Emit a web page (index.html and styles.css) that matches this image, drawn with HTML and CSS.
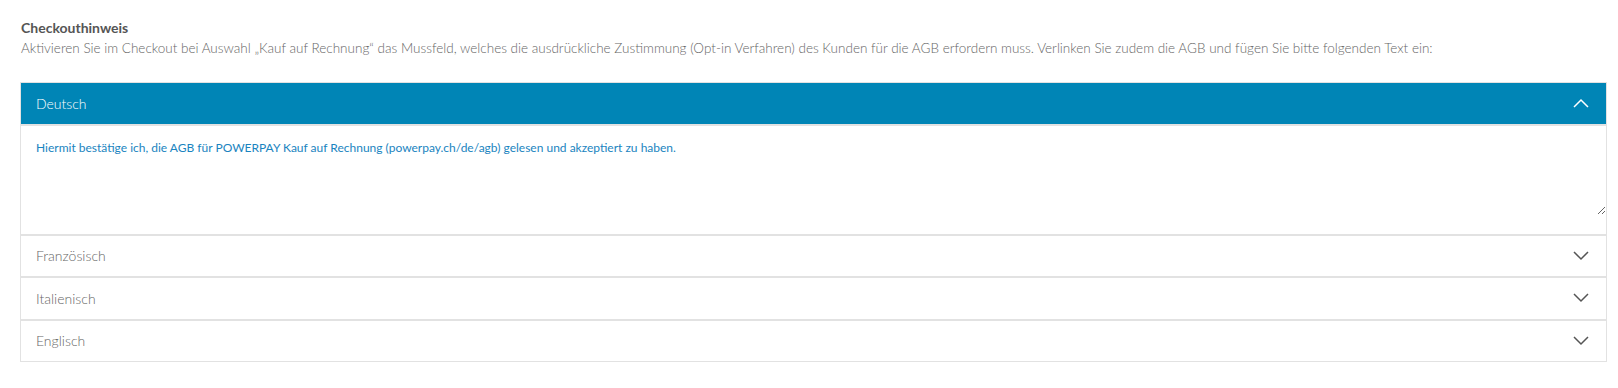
FILE: index.html
```html
<!DOCTYPE html>
<html lang="de">
<head>
  <meta charset="UTF-8" />
  <meta name="viewport" content="width=device-width, initial-scale=1" />
  <title>Checkouthinweis</title>
  <link rel="stylesheet" href="styles.css">
</head>
<body>
  <div class="page">
    <div class="hint">
      <div class="hint-title">Checkouthinweis</div>
      <div class="hint-text">Aktivieren Sie im Checkout bei Auswahl „Kauf auf Rechnung“ das Mussfeld, welches die ausdrückliche Zustimmung (Opt-in Verfahren) des Kunden für die AGB erfordern muss. Verlinken Sie zudem die AGB und fügen Sie bitte folgenden Text ein:</div>
    </div>

    <div class="accordion">
      <div class="panel open">
        <div class="panel-head">
          <span>Deutsch</span>
          <svg class="chevron" width="16" height="10" viewBox="0 0 16 10"><path d="M1 9 L8 2 L15 9" fill="none" stroke="currentColor" stroke-width="1.5"/></svg>
        </div>
        <div class="panel-body">
          <textarea class="agb-text">Hiermit bestätige ich, die AGB für POWERPAY Kauf auf Rechnung (powerpay.ch/de/agb) gelesen und akzeptiert zu haben.</textarea>
        </div>
      </div>
      <div class="panel">
        <div class="panel-head">
          <span>Französisch</span>
          <svg class="chevron" width="16" height="10" viewBox="0 0 16 10"><path d="M1 1 L8 8 L15 1" fill="none" stroke="currentColor" stroke-width="1.5"/></svg>
        </div>
      </div>
      <div class="panel">
        <div class="panel-head">
          <span>Italienisch</span>
          <svg class="chevron" width="16" height="10" viewBox="0 0 16 10"><path d="M1 1 L8 8 L15 1" fill="none" stroke="currentColor" stroke-width="1.5"/></svg>
        </div>
      </div>
      <div class="panel">
        <div class="panel-head">
          <span>Englisch</span>
          <svg class="chevron" width="16" height="10" viewBox="0 0 16 10"><path d="M1 1 L8 8 L15 1" fill="none" stroke="currentColor" stroke-width="1.5"/></svg>
        </div>
      </div>
    </div>
  </div>
</body>
</html>
```

FILE: styles.css
```css
body {
  margin: 0;
  font-family: Lato, "Open Sans", Arial, sans-serif;
  background-color: #fff;
  color: #666;
}
.page {
  padding: 18px 11px 0 20px;
}
.hint {
  padding-left: 1px;
  line-height: 20px;
}
.hint-title {
  font-size: 14px;
  font-weight: bold;
  color: #555;
}
.hint-text {
  font-size: 13.5px;
  color: #666;
  font-weight: 300;
}
.accordion {
  margin-top: 24px;
}
.panel {
  border: 1px solid #e2e2e2;
}
.panel-head {
  display: flex;
  justify-content: space-between;
  align-items: center;
  height: 40.5px;
  padding: 0 17px 0 15px;
  font-size: 14px;
  color: #666;
  font-weight: 300;
}
.panel.open .panel-head {
  background-color: #0085b6;
  color: #fff;
}
.chevron {
  color: #555;
}
.panel.open .chevron {
  color: #fff;
}
.panel-body {
  border-top: 2px solid #e2e2e2;
  padding-bottom: 19px;
}
.agb-text {
  display: block;
  box-sizing: border-box;
  width: 100%;
  height: 89px;
  margin: 0;
  padding: 13px 15px;
  border: none;
  outline: none;
  font-family: Lato, "Open Sans", Arial, sans-serif;
  font-size: 12px;
  line-height: 18px;
  color: #1a84c0;
  resize: vertical;
}
```
